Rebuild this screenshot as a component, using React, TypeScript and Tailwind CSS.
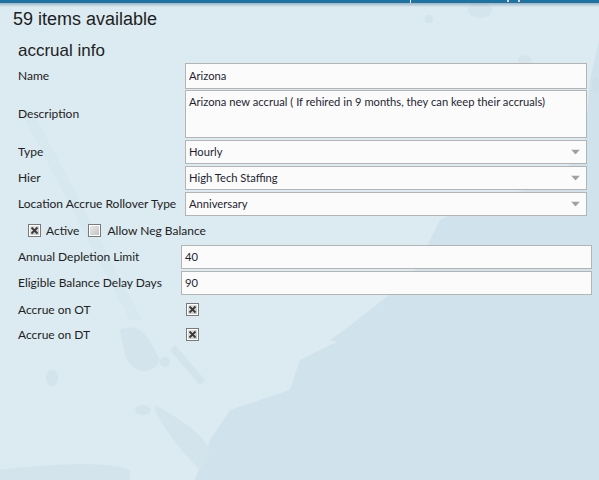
import React from "react";

const Check = ({ checked }: { checked: boolean }) => (
  <svg width="13" height="13" viewBox="0 0 13 13" className="shrink-0">
    <defs>
      <linearGradient id={checked ? "cbg1" : "cbg2"} x1="0" y1="0" x2="1" y2="1">
        <stop offset="0" stopColor="#e8e8e8" />
        <stop offset="1" stopColor="#c4c4c4" />
      </linearGradient>
    </defs>
    <rect x="0.5" y="0.5" width="12" height="12" fill="#fff" stroke="#7a7a7a" />
    <rect x="2" y="2" width="9" height="9" fill={`url(#${checked ? "cbg1" : "cbg2"})`} />
    {checked && (
      <path d="M3.5 3.5 L9.5 9.5 M9.5 3.5 L3.5 9.5" stroke="#3a3a3a" strokeWidth="1.8" />
    )}
  </svg>
);

const Arrow = () => (
  <svg width="9" height="5" viewBox="0 0 9 5" className="absolute right-[6px] top-1/2 -translate-y-1/2">
    <path d="M0 0 H9 L4.5 5 Z" fill="#a0a0a0" />
  </svg>
);

const inputCls =
  "h-full border border-[#b4b4b4] bg-[#fbfbfb] pl-[3px] flex items-center text-[11.2px] text-[#1f1f33]";

export default function App() {
  return (
    <div
      className="relative w-[599px] h-[480px] overflow-hidden bg-[#dceaf1] text-[12px]"
      style={{ fontFamily: "Lato, 'Noto Sans', sans-serif" }}
    >
      {/* background splash */}
      <svg className="absolute inset-0" width="599" height="480" viewBox="0 0 599 480">
        <path
          d="M599 40 L590 80 L585 140 L560 180 L470 205 L440 220 L420 260 L400 300 L370 330 L330 345 L300 360 L290 390 L260 400 L230 410 L210 440 L195 480 L599 480 Z"
          fill="#d0e2eb"
        />
        <path d="M330 340 C360 320 380 300 410 280 C420 300 400 330 360 350 Z" fill="#d0e2eb" />
        <path d="M120 330 C140 320 150 340 160 360 C150 380 130 370 125 355 Z" fill="#d3e4ec" />
        <ellipse cx="52" cy="378" rx="6" ry="8" fill="#d3e4ec" />
        <ellipse cx="165" cy="362" rx="5" ry="5" fill="#d3e4ec" />
        <ellipse cx="143" cy="410" rx="8" ry="5" fill="#d3e4ec" />
        <path d="M175 345 L205 380 L200 385 L170 350 Z" fill="#d3e4ec" />
        <path d="M155 405 C180 420 200 430 210 450 L200 470 C180 450 165 430 155 410 Z" fill="#d3e4ec" />
        <path d="M0 480 L0 470 C60 463 110 462 130 470 L130 480 Z" fill="#d3e4ec" />
        <ellipse cx="480" cy="10" rx="12" ry="8" fill="#d5e5ed" />
        <ellipse cx="429" cy="19" rx="4" ry="4" fill="#d3e4ec" />
        <ellipse cx="525" cy="62" rx="7" ry="7" fill="#d5e5ed" />
        <ellipse cx="596" cy="85" rx="4" ry="8" fill="#cde0ea" />
        <path d="M20 110 L130 320 L142 320 L32 110 Z" fill="#d6e6ee" opacity="0.6" />
      </svg>

      {/* top bar */}
      <div className="relative">
        <div className="relative h-[3px] bg-[#1b74a6]">
          <div className="absolute left-[410px] top-0 h-[3px] w-px bg-[#e6eef3]" />
          <div className="absolute left-[507px] top-0 h-[2px] w-[2px] bg-[#e0d4dc]" />
          <div className="absolute left-[518px] top-0 h-[2px] w-[2px] bg-[#e0d4dc]" />
        </div>
        <div className="h-[4px] bg-gradient-to-b from-[#8a9aa6] to-transparent opacity-70" />
      </div>

      <div className="relative">
        <div
          className="pl-[13px] pt-[1px] text-[18px] leading-[22px] text-[#1e1e1e]"
          style={{ fontFamily: "'Liberation Sans', Arial, sans-serif" }}
        >
          59 items available
        </div>
        <div
          className="pl-[18px] pt-[11px] text-[17px] leading-[20px] text-[#1e1e1e]"
          style={{ fontFamily: "'Liberation Sans', Arial, sans-serif" }}
        >
          accrual info
        </div>

        <div className="pl-[18px] pt-[2px] flex flex-col">
          <div className="flex items-center h-[26px]">
            <div className="w-[167px] shrink-0 text-[#222]">Name</div>
            <div className={`w-[402px] ${inputCls}`}>Arizona</div>
          </div>
          <div className="flex items-center h-[48px] mt-[1px]">
            <div className="w-[167px] shrink-0 text-[#222]">Description</div>
            <div className="w-[402px] h-full border border-[#b4b4b4] bg-[#fbfbfb] pl-[3px] pt-[3px] text-[11.2px] text-[#1f1f33]">
              Arizona new accrual ( If rehired in 9 months, they can keep their accruals)
            </div>
          </div>
          {["Type:Hourly", "Hier:High Tech Staffing", "Location Accrue Rollover Type:Anniversary"].map((s) => {
            const [l, v] = s.split(":");
            return (
              <div key={l} className="flex items-center h-[24px] mt-[2px]">
                <div className="w-[167px] shrink-0 text-[#222]">{l}</div>
                <div className={`relative w-[402px] ${inputCls}`}>
                  {v}
                  <Arrow />
                </div>
              </div>
            );
          })}

          <div className="flex items-center h-[13px] mt-[8px] pl-[10px] text-[#222]">
            <Check checked />
            <span className="ml-[5px]">Active</span>
            <span className="ml-[9px] flex items-center">
              <Check checked={false} />
              <span className="ml-[6px]">Allow Neg Balance</span>
            </span>
          </div>

          <div className="flex items-center h-[24px] mt-[8px]">
            <div className="w-[163px] shrink-0 text-[#222]">Annual Depletion Limit</div>
            <div className={`w-[411px] ${inputCls}`}>40</div>
          </div>
          <div className="flex items-center h-[24px] mt-[2px]">
            <div className="w-[163px] shrink-0 text-[#222]">Eligible Balance Delay Days</div>
            <div className={`w-[411px] ${inputCls}`}>90</div>
          </div>
          <div className="flex items-center h-[13px] mt-[8px]">
            <div className="w-[168px] shrink-0 text-[#222]">Accrue on OT</div>
            <Check checked />
          </div>
          <div className="flex items-center h-[13px] mt-[12px]">
            <div className="w-[168px] shrink-0 text-[#222]">Accrue on DT</div>
            <Check checked />
          </div>
        </div>
      </div>
    </div>
  );
}
